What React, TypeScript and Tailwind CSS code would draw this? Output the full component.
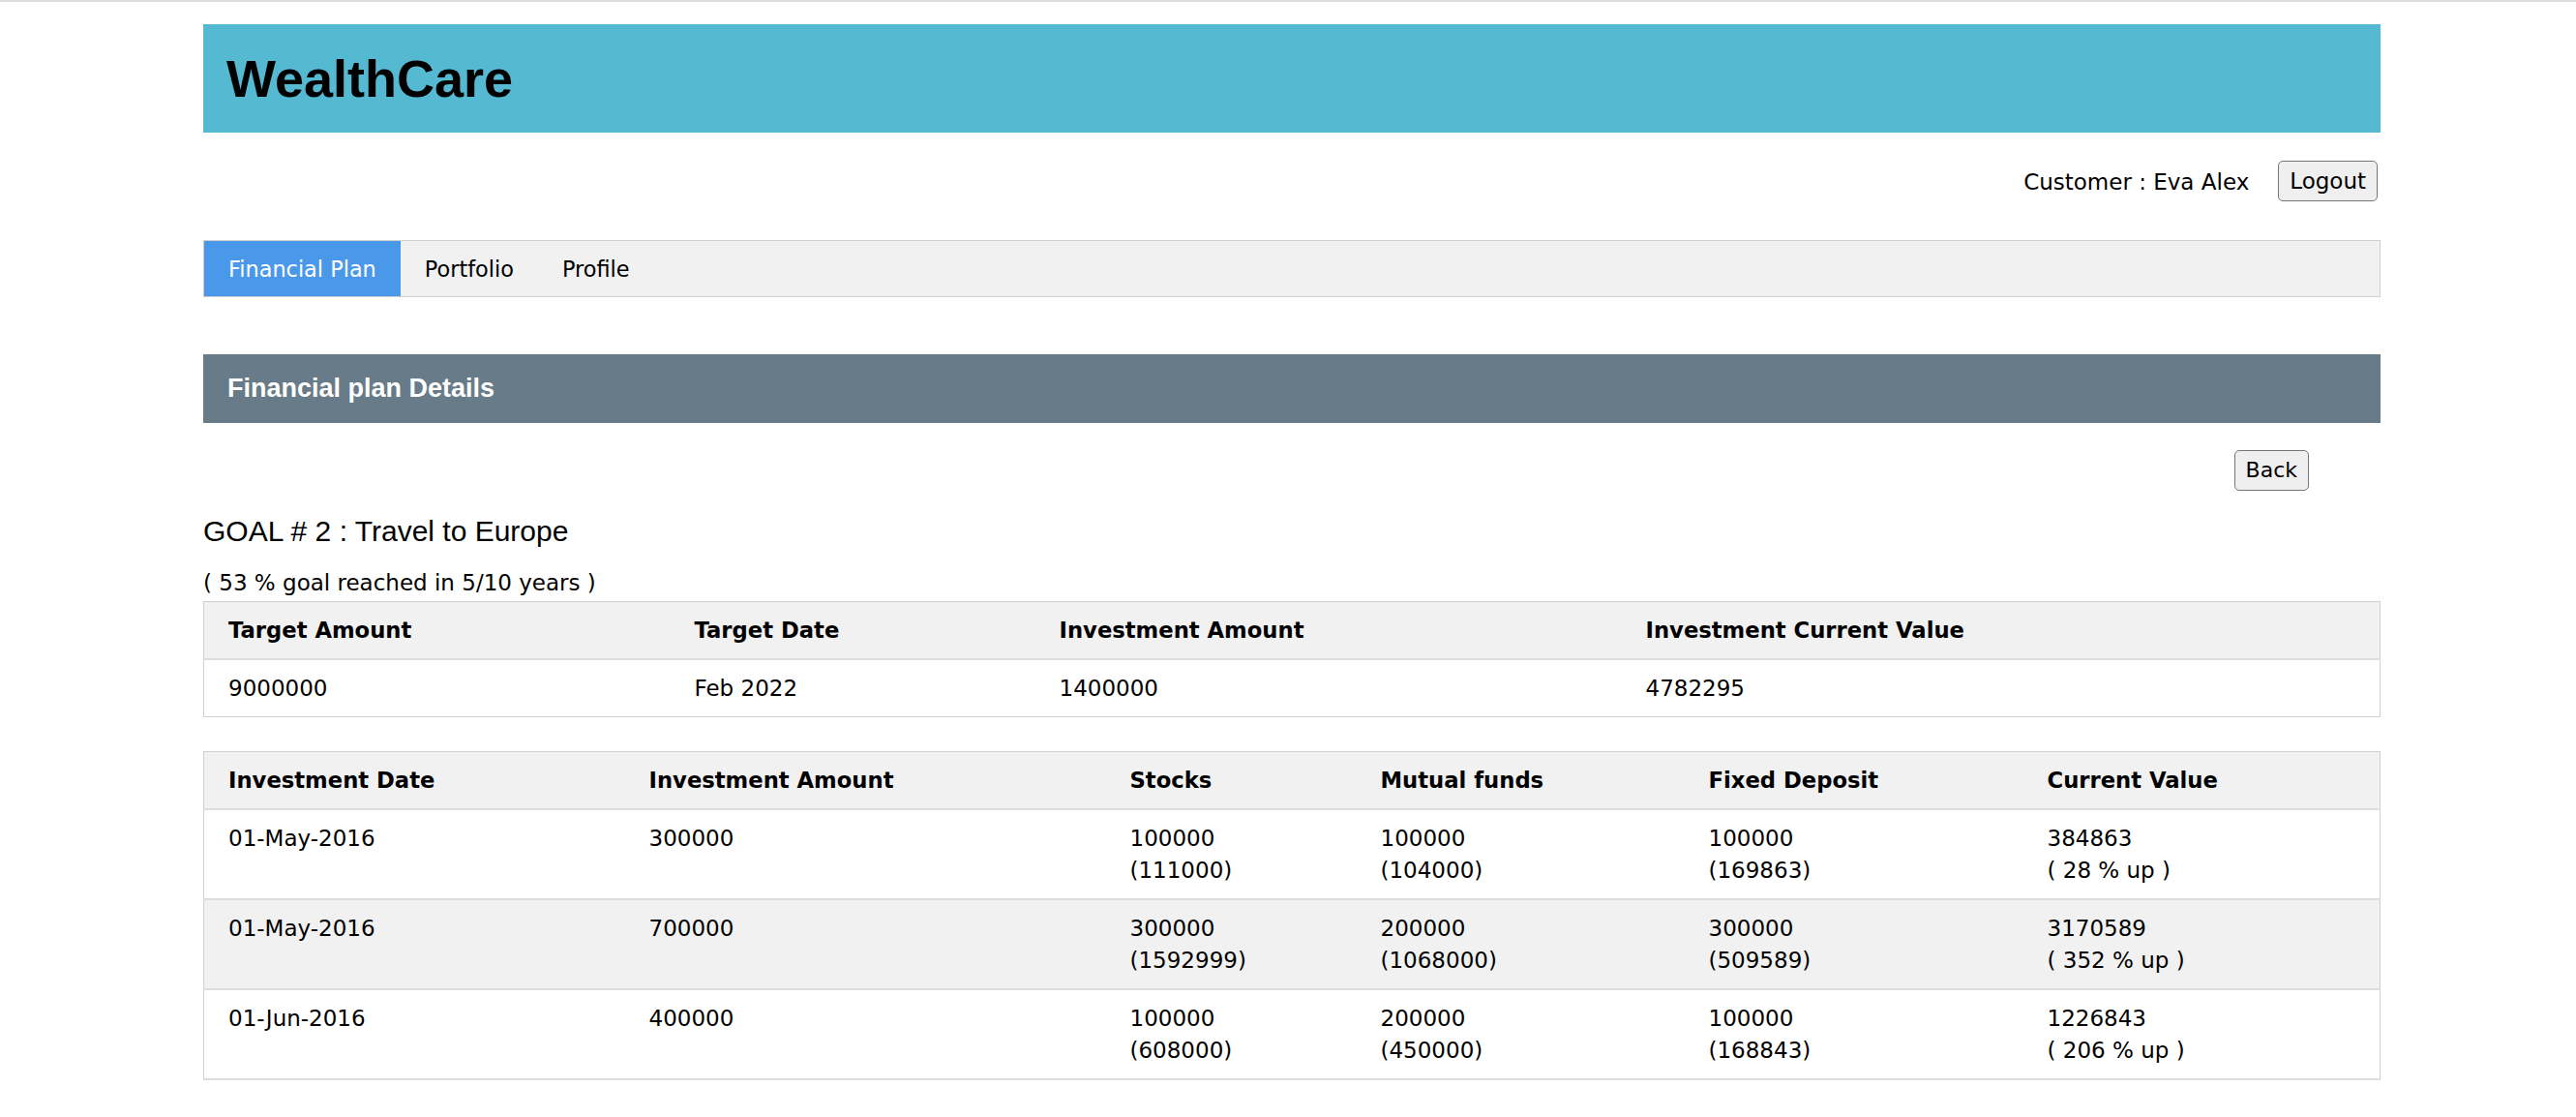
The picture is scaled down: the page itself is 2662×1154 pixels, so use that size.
import React from 'react';

// simple data for the two tables
const summary = {
  targetAmount: '9000000',
  targetDate: 'Feb 2022',
  investmentAmount: '1400000',
  currentValue: '4782295',
};

interface Investment {
  date: string;
  amount: string;
  stocks: [string, string];
  mutual: [string, string];
  fixed: [string, string];
  current: [string, string];
}

const investments: Investment[] = [
  {
    date: '01-May-2016',
    amount: '300000',
    stocks: ['100000', '(111000)'],
    mutual: ['100000', '(104000)'],
    fixed: ['100000', '(169863)'],
    current: ['384863', '( 28 % up )'],
  },
  {
    date: '01-May-2016',
    amount: '700000',
    stocks: ['300000', '(1592999)'],
    mutual: ['200000', '(1068000)'],
    fixed: ['300000', '(509589)'],
    current: ['3170589', '( 352 % up )'],
  },
  {
    date: '01-Jun-2016',
    amount: '400000',
    stocks: ['100000', '(608000)'],
    mutual: ['200000', '(450000)'],
    fixed: ['100000', '(168843)'],
    current: ['1226843', '( 206 % up )'],
  },
];

function TwoLine({ value }: { value: [string, string] }) {
  return (
    <>
      <div>{value[0]}</div>
      <div>{value[1]}</div>
    </>
  );
}

const th = 'text-left font-bold text-[22.7px] pl-[25px] pr-2 pt-[13px] pb-[12px]';
const td = 'text-left align-top pl-[25px] pr-2 pt-[13px] pb-[12px]';

export default function App() {
  return (
    <div className="min-h-screen bg-white border-t-2 border-[#dcdcdc] text-black font-['DejaVu_Sans',Verdana,sans-serif] text-[23px] leading-[33px]">
      <div className="ml-[210px] w-[2250px]">
        {/* brand header */}
        <div className="mt-[23px] h-[112px] bg-[#54b9d1] flex items-center pl-[24px]">
          <h1 className="font-['Liberation_Sans',Arial,sans-serif] font-bold text-[54px] leading-none">WealthCare</h1>
        </div>

        {/* customer + logout */}
        <div className="mt-[29px] flex items-center justify-end gap-[30px] pr-[3px]">
          <span className="pt-[2px]">Customer : Eva Alex</span>
          <button className="h-[42px] px-[11px] bg-[#efefef] border border-[#767676] rounded-[5px] leading-none">
            Logout
          </button>
        </div>

        {/* nav tabs */}
        <nav className="mt-[40px] h-[59px] bg-[#f1f1f1] border border-[#cfcfcf] flex text-[22.4px]">
          <a className="px-[25px] pt-[2px] flex items-center bg-[#4a98ea] text-white">Financial Plan</a>
          <a className="px-[25px] pt-[2px] flex items-center">Portfolio</a>
          <a className="px-[25px] pt-[2px] flex items-center">Profile</a>
        </nav>

        {/* section heading */}
        <div className="mt-[59px] h-[71px] bg-[#677b88] flex items-center pl-[25px]">
          <h2 className="font-['Liberation_Sans',Arial,sans-serif] font-bold text-[27px] leading-none text-white">
            Financial plan Details
          </h2>
        </div>

        <div className="mt-[28px] flex justify-end pr-[74px]">
          <button className="h-[42px] px-[11px] bg-[#efefef] border border-[#767676] rounded-[5px] leading-none text-[22px]">
            Back
          </button>
        </div>

        <h3 className="mt-[25px] font-['Liberation_Sans',Arial,sans-serif] text-[30px] leading-[34px]">
          GOAL # 2 : Travel to Europe
        </h3>
        <p className="mt-[20px]">( 53 % goal reached in 5/10 years )</p>

        {/* goal summary */}
        <table className="mt-[2px] w-full table-fixed border-collapse border border-[#d0d0d0]">
          <colgroup>
            <col className="w-[482px]" />
            <col className="w-[377px]" />
            <col className="w-[606px]" />
            <col />
          </colgroup>
          <thead>
            <tr className="bg-[#f1f1f1] border-b-2 border-[#dddddd]">
              <th className={th}>Target Amount</th>
              <th className={th}>Target Date</th>
              <th className={th}>Investment Amount</th>
              <th className={th}>Investment Current Value</th>
            </tr>
          </thead>
          <tbody>
            <tr>
              <td className={td}>{summary.targetAmount}</td>
              <td className={td}>{summary.targetDate}</td>
              <td className={td}>{summary.investmentAmount}</td>
              <td className={td}>{summary.currentValue}</td>
            </tr>
          </tbody>
        </table>

        {/* investments breakdown */}
        <table className="mt-[35px] w-full table-fixed border-collapse border border-[#d0d0d0]">
          <colgroup>
            <col className="w-[435px]" />
            <col className="w-[497px]" />
            <col className="w-[259px]" />
            <col className="w-[339px]" />
            <col className="w-[350px]" />
            <col />
          </colgroup>
          <thead>
            <tr className="bg-[#f1f1f1] border-b-2 border-[#dddddd]">
              <th className={th}>Investment Date</th>
              <th className={th}>Investment Amount</th>
              <th className={th}>Stocks</th>
              <th className={th}>Mutual funds</th>
              <th className={th}>Fixed Deposit</th>
              <th className={th}>Current Value</th>
            </tr>
          </thead>
          <tbody>
            {investments.map((inv, i) => (
              <tr key={i} className={i % 2 === 1 ? 'bg-[#f1f1f1] border-b-2 border-[#dddddd]' : 'border-b-2 border-[#dddddd]'}>
                <td className={td}>{inv.date}</td>
                <td className={td}>{inv.amount}</td>
                <td className={td}><TwoLine value={inv.stocks} /></td>
                <td className={td}><TwoLine value={inv.mutual} /></td>
                <td className={td}><TwoLine value={inv.fixed} /></td>
                <td className={td}><TwoLine value={inv.current} /></td>
              </tr>
            ))}
          </tbody>
        </table>
      </div>
    </div>
  );
}
